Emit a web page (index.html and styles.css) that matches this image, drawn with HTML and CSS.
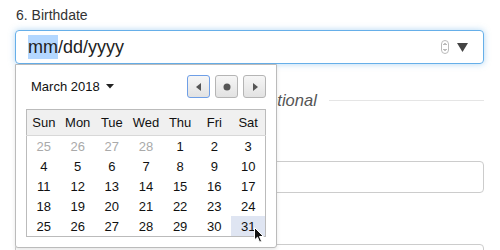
FILE: index.html
```html
<!DOCTYPE html>
<html lang="en">
<head>
    <meta charset="UTF-8">
    <title>Birthdate</title>
    <link rel="stylesheet" href="styles.css">
</head>
<body>
    <div class="form">
        <label class="field-label">6. Birthdate</label>
        <div class="date-input">
            <span class="date-text"><span class="selected">mm</span>/dd/yyyy</span>
            <span class="spin">
                <svg width="8" height="14" viewBox="0 0 8 14"><rect x="0.5" y="0.5" width="7" height="13" rx="3.5" fill="#fff" stroke="#bbb"/><path d="M2.5 5 L4 3.5 L5.5 5" fill="none" stroke="#666" stroke-width="0.9"/><path d="M2.5 9 L4 10.5 L5.5 9" fill="none" stroke="#666" stroke-width="0.9"/></svg>
            </span>
            <span class="drop">
                <svg width="11" height="9" viewBox="0 0 11 9"><polygon points="0,0 11,0 5.5,9" fill="#444"/></svg>
            </span>
        </div>

        <div class="section-row">
            <span class="section-title">optional</span>
            <span class="section-line"></span>
        </div>

        <div class="text-field"></div>
        <div class="text-field second"></div>

        <!-- date picker popup -->
        <div class="picker">
            <div class="picker-head">
                <span class="month">March 2018 <svg width="8" height="5" viewBox="0 0 8 5"><polygon points="0,0 8,0 4,4.5" fill="#222"/></svg></span>
                <div class="nav">
                    <button class="nav-btn focused"><svg width="6" height="8" viewBox="0 0 6 8"><polygon points="5,0 5,8 0,4" fill="#555"/></svg></button>
                    <button class="nav-btn"><svg width="8" height="8" viewBox="0 0 8 8"><circle cx="4" cy="4" r="3.5" fill="#555"/></svg></button>
                    <button class="nav-btn"><svg width="6" height="8" viewBox="0 0 6 8"><polygon points="1,0 1,8 6,4" fill="#555"/></svg></button>
                </div>
            </div>
            <table class="cal">
                <thead>
                    <tr><th>Sun</th><th>Mon</th><th>Tue</th><th>Wed</th><th>Thu</th><th>Fri</th><th>Sat</th></tr>
                </thead>
                <tbody>
                    <tr><td class="other">25</td><td class="other">26</td><td class="other">27</td><td class="other">28</td><td>1</td><td>2</td><td>3</td></tr>
                    <tr><td>4</td><td>5</td><td>6</td><td>7</td><td>8</td><td>9</td><td>10</td></tr>
                    <tr><td>11</td><td>12</td><td>13</td><td>14</td><td>15</td><td>16</td><td>17</td></tr>
                    <tr><td>18</td><td>19</td><td>20</td><td>21</td><td>22</td><td>23</td><td>24</td></tr>
                    <tr><td>25</td><td>26</td><td>27</td><td>28</td><td>29</td><td>30</td><td class="hover">31</td></tr>
                </tbody>
            </table>
            <svg class="cursor" width="11" height="17" viewBox="0 0 11 17"><path d="M0.5 0.5 L0.5 13 L3.5 10.2 L5.6 15.2 L7.6 14.3 L5.5 9.5 L9.5 9.5 Z" fill="#111" stroke="#fff" stroke-width="1"/></svg>
        </div>
    </div>
</body>
</html>
```

FILE: styles.css
```css
body {
    margin: 0;
    background-color: #fff;
    font-family: 'Liberation Sans', Arial, sans-serif;
    color: #333;
}

.form {
    position: relative;
    padding: 5px 16px 0 15px;
}

.field-label {
    display: block;
    font-size: 14px;
    line-height: 20px;
    margin-left: 1px;
    margin-bottom: 5px;
}

/* focused date input */
.date-input {
    display: flex;
    align-items: center;
    height: 32px;
    border: 1px solid #66afe9;
    border-radius: 4px;
    box-shadow: 0 0 6px rgba(102, 175, 233, 0.5);
    padding: 0 15px 0 12px;
}

.date-text {
    flex: 1;
    font-size: 18px;
    line-height: 24px;
    color: #222;
}

.selected {
    display: inline-block;
    background-color: #b3d7ff;
}

.spin {
    display: flex;
    margin-right: 8px;
}

.drop {
    display: flex;
}

.section-row {
    display: flex;
    align-items: center;
    margin-top: 25px;
    height: 22px;
}

.section-title {
    margin-left: 244px;
    font-size: 16.5px;
    font-style: italic;
    color: #555;
}

.section-line {
    flex: 1;
    height: 1px;
    margin-left: 12px;
    background-color: #e5e5e5;
}

.text-field {
    height: 30px;
    border: 1px solid #ccc;
    border-radius: 4px;
    margin-top: 50px;
}

.text-field.second {
    margin-top: 51px;
}

/* popup calendar */
.picker {
    position: absolute;
    top: 64px;
    left: 15px;
    width: 240px;
    padding: 10px;
    background-color: #fff;
    border: 1px solid #bbb;
    border-radius: 0 0 3px 3px;
    box-shadow: 0 2px 4px rgba(0, 0, 0, 0.1);
}

.picker-head {
    display: flex;
    align-items: center;
    justify-content: space-between;
    height: 23px;
    margin-bottom: 11px;
    padding-left: 5px;
}

.month {
    font-size: 13px;
    color: #111;
    display: flex;
    align-items: center;
    gap: 6px;
}

.nav {
    display: flex;
    gap: 5px;
}

.nav-btn {
    display: flex;
    align-items: center;
    justify-content: center;
    width: 23px;
    height: 23px;
    padding: 0;
    border: 1px solid #b5b5b5;
    border-radius: 3px;
    background: linear-gradient(#f6f6f6, #e2e2e2);
}

.nav-btn.focused {
    border-color: #6f9fe6;
}

.cal {
    width: 240px;
    border-collapse: collapse;
    border: 1px solid #bbb;
    table-layout: fixed;
    font-size: 13px;
}

.cal th {
    height: 25px;
    font-weight: normal;
    color: #111;
    background-color: #f0f0f0;
    border-bottom: 1px solid #d8d8d8;
    padding: 0;
}

.cal td {
    height: 20px;
    padding: 0;
    text-align: center;
    color: #111;
}

.cal td.other {
    color: #aaa;
}

.cal td.hover {
    background-color: #dfe5f2;
}

.cursor {
    position: absolute;
    left: 238px;
    top: 162px;
}
```
